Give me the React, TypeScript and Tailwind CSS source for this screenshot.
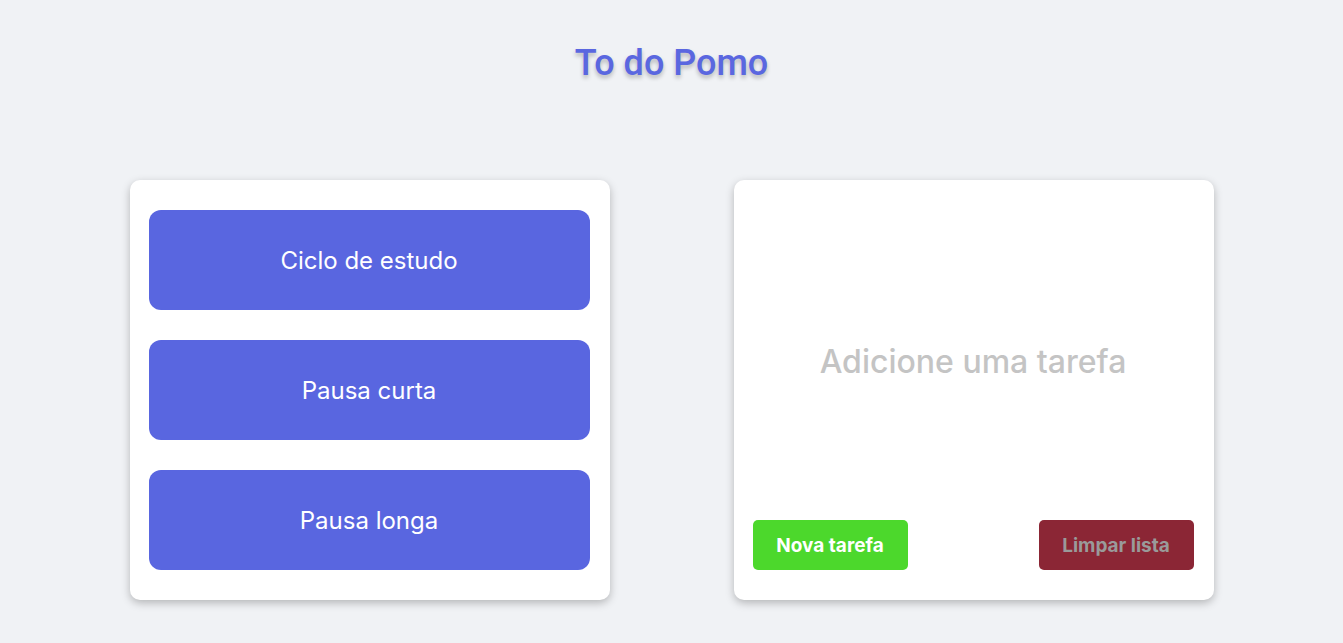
const modes = ['Ciclo de estudo', 'Pausa curta', 'Pausa longa'];

export default function App() {
  return (
    <div className="min-h-[643px] bg-[#f0f2f5] font-['Inter',sans-serif]">
      <header className="flex justify-center pt-[37px]">
        <h1 className="font-['Roboto',sans-serif] text-[36px] font-medium leading-[52px] text-[#5a67e0] [text-shadow:0_3px_4px_rgba(0,0,0,0.25)]">
          To do Pomo
        </h1>
      </header>

      <main className="mt-[91px] flex justify-center gap-[124px]">
        <section className="flex h-[420px] w-[480px] flex-col gap-[30px] rounded-[10px] bg-white pl-[19px] pr-[20px] py-[30px] shadow-[0_3px_8px_rgba(0,0,0,0.25)]">
          {modes.map((mode) => (
            <button
              key={mode}
              className="flex h-[100px] w-full items-center justify-center rounded-[12px] bg-[#5966e0] pt-[2px] text-[24px] text-white"
            >
              {mode}
            </button>
          ))}
        </section>

        <section className="flex h-[420px] w-[480px] flex-col rounded-[10px] bg-white pl-[19px] pr-[20px] pb-[30px] shadow-[0_3px_8px_rgba(0,0,0,0.25)]">
          <div className="flex flex-1 items-center justify-center pt-[24px]">
            <p className="text-[32px] font-medium text-[#c4c4c4]">Adicione uma tarefa</p>
          </div>
          <div className="flex justify-between">
            <button className="h-[50px] w-[155px] rounded-[5px] bg-[#4cd82c] pt-[2px] text-[19px] font-bold text-white">
              Nova tarefa
            </button>
            <button className="h-[50px] w-[155px] rounded-[5px] bg-[#8b2635] pt-[2px] text-[19px] font-bold text-[#9a9a9a]">
              Limpar lista
            </button>
          </div>
        </section>
      </main>
    </div>
  );
}
